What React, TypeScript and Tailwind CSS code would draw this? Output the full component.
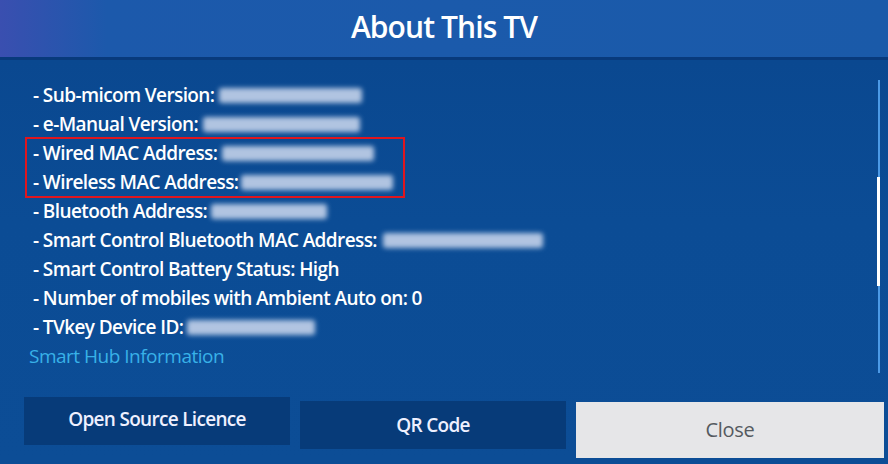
import React from "react";

type Row = { label: string; blur?: number; gap?: number };

const rows: Row[] = [
  { label: "- Sub-micom Version:", blur: 143, gap: 5 },
  { label: "- e-Manual Version:", blur: 157, gap: 5 },
  { label: "- Wired MAC Address:", blur: 152, gap: 5 },
  { label: "- Wireless MAC Address:", blur: 152, gap: 3 },
  { label: "- Bluetooth Address:", blur: 116, gap: 4 },
  { label: "- Smart Control Bluetooth MAC Address:", blur: 160, gap: 6 },
  { label: "- Smart Control Battery Status: High" },
  { label: "- Number of mobiles with Ambient Auto on: 0" },
  { label: "- TVkey Device ID:", blur: 128, gap: 4 },
];

function Blur({ w, gap }: { w: number; gap: number }) {
  return (
    <span
      className="inline-block h-[15px] rounded-[3px] bg-[#c3d2ea] blur-[2.5px] opacity-90"
      style={{ width: w, marginLeft: gap }}
    />
  );
}

export default function App() {
  return (
    <div
      className="w-[888px] h-[464px] overflow-hidden flex flex-col bg-[#0b4b93] text-white"
      style={{ fontFamily: '"Open Sans", "Noto Sans", sans-serif' }}
    >
      <header className="h-[57px] shrink-0 flex items-center justify-center bg-[linear-gradient(90deg,#3a4fb0_0%,#1c59ab_12%,#1b5aab_50%,#1a5aa9_100%)]">
        <h1 className="text-[30px] font-semibold tracking-[-0.9px] leading-none pb-[3px]">
          About This TV
        </h1>
      </header>
      <div className="h-[3px] shrink-0 bg-[#083a7c]" />
      <main className="relative flex-1 flex flex-col bg-[linear-gradient(180deg,#0a4890_0%,#0b4c95_40%,#0c4d96_100%)]">
        <div className="relative pt-[21px] pl-[33px]">
          <div className="absolute left-[25px] top-[77px] w-[380px] h-[61px] border-2 border-[#e0161e]" />
          {rows.map((r) => (
            <div
              key={r.label}
              className="h-[29px] flex items-center text-[19px] font-semibold tracking-[-0.6px] whitespace-nowrap"
            >
              <span>{r.label}</span>
              {r.blur ? <Blur w={r.blur} gap={r.gap ?? 5} /> : null}
            </div>
          ))}
          <div className="h-[29px] -ml-[4px] flex items-center text-[19px] tracking-[-0.5px] text-[#38b1e8]">
            Smart Hub Information
          </div>
        </div>
        <div className="absolute right-[8px] top-[20px] w-[2px] h-[293px] bg-[#4c9ae6]">
          <div className="absolute -left-[1px] top-[97px] w-[3px] h-[109px] bg-white" />
        </div>
        <footer className="mt-auto mb-[6px] flex items-start pl-[24px] pr-[4px] gap-[10px]">
          <button className="w-[266px] h-[48px] bg-[#073b79] text-[19px] font-semibold tracking-[-0.7px] text-[#eef0ff] pb-[4px]">
            Open Source Licence
          </button>
          <button className="mt-[4px] w-[266px] h-[48px] bg-[#073b79] text-[19px] font-semibold tracking-[-0.7px] text-[#eef0ff]">
            QR Code
          </button>
          <button className="mt-[5px] flex-1 h-[56px] bg-[#e6e6e8] text-[20px] text-[#555a60] tracking-[-0.3px]">
            Close
          </button>
        </footer>
      </main>
    </div>
  );
}
